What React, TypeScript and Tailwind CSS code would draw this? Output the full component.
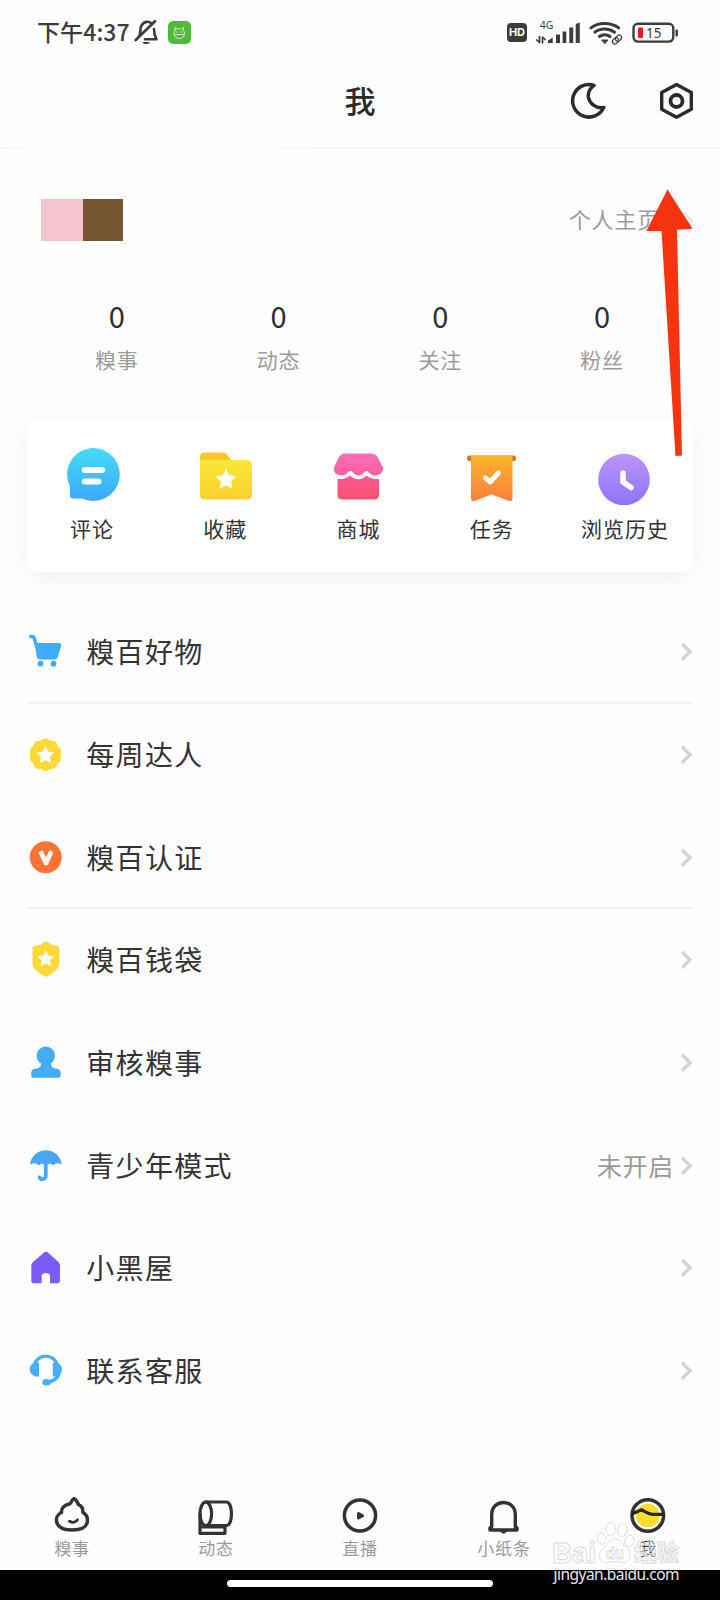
import type { ReactNode } from "react";

type IconProps = { box: string; className: string; children: ReactNode };

function Icon({ box, className, children }: IconProps) {
  return (
    <svg viewBox={box} className={className} fill="none" strokeLinecap="round" strokeLinejoin="round">
      {children}
    </svg>
  );
}

const STAR = "M0 -9.6 L2.9 -3.6 L9.4 -2.8 L4.7 1.9 L5.8 8.5 L0 5.4 L-5.8 8.5 L-4.7 1.9 L-9.4 -2.8 L-2.9 -3.6Z";

function StatusBar() {
  return (
    <div className="flex h-[65px] items-center pl-[37px] pr-[41px] text-[#3c3c3c]">
      <span className="-mt-[3px] text-[23px] leading-[34px] font-medium tracking-[0.1px]">下午4:37</span>
      <Icon box="134 20 27 27" className="ml-[4px] h-[27px] w-[27px]">
        <path d="M139.500 36 C141 33 140 30 141 27.500 C143.500 22 149.500 21.500 152 25 M154 30 C154 34.500 154.500 36.500 156.500 40.300 H145" stroke="#3c3c3c" strokeWidth="2.600" />
        <path d="M135.700 41 L155 22.200" stroke="#3c3c3c" strokeWidth="2.700" />
        <path d="M142.300 43 H149.800 C149 45.800 143.500 45.800 142.300 43Z" fill="#3c3c3c" />
      </Icon>
      <Icon box="168 21 23 23" className="ml-[7px] h-[23px] w-[23px]">
        <rect x="168" y="21" width="23" height="23" rx="5" fill="#4fb938" />
        <path d="M175 30 V27.300 L177.200 29 H181.200 L183.400 27.300 V30 C185.800 34 184.200 38.500 179.300 38.500 C174.200 38.500 172.800 34 175 30Z M174.500 34.500 H184" stroke="#d9f5c9" strokeWidth=".9" />
        <circle cx="177.200" cy="32" r=".7" fill="#d9f5c9" />
        <circle cx="181.500" cy="32" r=".7" fill="#d9f5c9" />
      </Icon>
      <div className="ml-auto flex items-center">
        <span className="flex h-[19px] w-[20px] items-center justify-center rounded-[4px] bg-[#3c3c3c] font-['Inter',sans-serif] text-[11px] font-bold text-white">HD</span>
        <Icon box="532 19 51 27" className="ml-[5px] h-[27px] w-[51px]">
          <text x="539.800" y="29.300" fontSize="10.500" fill="#3c3c3c" fontFamily="Noto Sans, sans-serif">4G</text>
          <path d="M536.800 40 L539.500 42.500 V36.500 M542.500 43 V37 L545.200 39.500" stroke="#3c3c3c" strokeWidth="1.700" />
          <path d="M548 40.500 L552.700 37.500 V43 H548Z M556 34.500 H560 V43 H556Z M562.600 31.500 H566.300 V43 H562.600Z M569.300 27.500 H573.200 V43 H569.300Z M575.700 24 L579.800 22.500 V43 H575.700Z" fill="#3c3c3c" />
        </Icon>
        <Icon box="589 20 35 26" className="ml-[6px] h-[26px] w-[35px]">
          <path d="M591 27.800 C598 22 611 22 618.500 27.800 M595 32.200 C600 27.900 609 27.900 614.500 32.200 M599.500 36.500 C602.500 34 607 34 610 36.500" stroke="#3c3c3c" strokeWidth="3" />
          <path d="M602 40 H608 L605 43.500Z" fill="#3c3c3c" stroke="#3c3c3c" strokeWidth="1" />
          <g transform="rotate(-42 617 39.300)" stroke="#3c3c3c" strokeWidth="1.200">
            <rect x="611.500" y="37" width="6.800" height="5" rx="2.500" />
            <rect x="615.500" y="37" width="6.800" height="5" rx="2.500" />
          </g>
        </Icon>
        <Icon box="632 22 47 22" className="ml-[8px] h-[22px] w-[47px]">
          <rect x="633.500" y="23.800" width="39.800" height="17.800" rx="4.500" stroke="#3c3c3c" strokeWidth="2.400" />
          <rect x="638" y="27.500" width="5" height="10.500" rx="1.200" fill="#e02020" />
          <rect x="675.500" y="29.500" width="2.400" height="7" rx="1" fill="#3c3c3c" />
          <text x="646" y="38" fontSize="13.500" fill="#3c3c3c" fontFamily="Noto Sans, sans-serif">15</text>
        </Icon>
      </div>
    </div>
  );
}

function TitleBar() {
  return (
    <header className="grid h-[82px] grid-cols-3 items-center pb-[10px]">
      <span />
      <h1 className="-mt-[2px] text-center text-[31px] leading-[40px] font-medium text-[#2b2b2b]">我</h1>
      <div className="flex items-center justify-end pr-[25px]">
        <Icon box="570 81 38 40" className="h-[40px] w-[38px]">
          <path d="M594 85.300 A16.300 16.300 0 1 0 603.800 107.400 C596 109 589.300 103.500 588.300 96.500 C587.900 92 590.500 88 594 85.300Z" stroke="#2b2b2b" strokeWidth="3.500" />
        </Icon>
        <Icon box="658 81 37 40" className="ml-[50px] h-[40px] w-[37px]">
          <path d="M676.500 84.500 L691.300 92.500 V109.300 L676.500 117.300 L661.700 109.300 V92.500Z" stroke="#2b2b2b" strokeWidth="3.400" />
          <circle cx="676.500" cy="101" r="6" stroke="#2b2b2b" strokeWidth="3.800" />
        </Icon>
      </div>
    </header>
  );
}

function Chevron({ className = "" }: { className?: string }) {
  return (
    <Icon box="680 1154.300 14 20" className={"h-[20px] w-[14px] " + className}>
      <path d="M683 1157 L691 1165 L683 1173" stroke="#d4d4d4" strokeWidth="3.400" strokeLinecap="butt" strokeLinejoin="miter" />
    </Icon>
  );
}

const stats = ["糗事", "动态", "关注", "粉丝"];

const shortcuts: { label: string; icon: ReactNode }[] = [
  {
    label: "评论",
    icon: (
      <>
        <path d="M93.500 447.500 A26.500 26.500 0 1 1 82 498 H73 Q70 498 70 495 V486 A26.500 26.500 0 0 1 93.500 447.500Z" fill="url(#blue)" />
        <path d="M84.800 469.600 H102 M84.800 480.900 H98.500" stroke="#fff" strokeWidth="6" />
      </>
    ),
  },
  {
    label: "收藏",
    icon: (
      <>
        <path d="M200 474 V457 Q200 452 205 452 H223 Q226 452 228 455 L232 461 V474Z" fill="#fac72b" />
        <path d="M200 459.500 H247 Q252 459.500 252 464 V494 Q252 499 247 499 H205 Q200 499 200 494Z" fill="url(#yellow)" />
        <path d={STAR} transform="translate(226 479)" fill="#fff" stroke="#fff" strokeWidth="1" />
      </>
    ),
  },
  {
    label: "商城",
    icon: (
      <>
        <path d="M345 453 H371 Q375.500 453 377.500 456.500 L382.500 466 C384.500 471 380 475 375 475 C370 475 369 470.500 366.600 470.500 C364 470.500 363 475 358.500 475 C354 475 353 470.500 350.300 470.500 C348 470.500 347 475 342 475 C336 475 332.500 471 334.500 466 L339 456.500 Q341 453 345 453Z" fill="url(#pink)" />
        <path d="M337.500 478.500 C342 479 346.500 478 350 475 C355 480 362 480 366.500 475 C370 478 374.500 479 379 478.500 V494 Q379 499 374 499 H342.500 Q337.500 499 337.500 494Z" fill="url(#rose)" />
      </>
    ),
  },
  {
    label: "任务",
    icon: (
      <>
        <rect x="467" y="455" width="49" height="5.600" rx="2.800" fill="#d9702e" />
        <path d="M471 455.500 H512.500 V498 Q512.500 502 508 500 L491.700 494 L475.500 500 Q471 502 471 498Z" fill="url(#orange)" />
        <path d="M485.500 477.500 L490 481.500 L498.500 472.500" stroke="#fff" strokeWidth="5" />
      </>
    ),
  },
  {
    label: "浏览历史",
    icon: (
      <>
        <circle cx="624" cy="479" r="25.800" fill="url(#purple)" />
        <path d="M623 472.500 V481.500 L631 487" stroke="#fff" strokeWidth="5.600" />
      </>
    ),
  },
];

const shortcutBoxes = ["66 444.500 56 60", "199 444.500 56 60", "332 444.500 56 60", "465 444.500 56 60", "598 444.500 56 60"];

function Gradients() {
  const stops: [string, string, string][] = [
    ["blue", "#45dcf5", "#3ea8fd"],
    ["yellow", "#fae739", "#fbd02f"],
    ["pink", "#f96eb6", "#fb5fa2"],
    ["rose", "#fb5890", "#fc5070"],
    ["orange", "#fbb42c", "#fb7f3c"],
    ["purple", "#bd93f8", "#8b74fb"],
  ];
  return (
    <defs>
      {stops.map(([id, from, to]) => (
        <linearGradient key={id} id={id} x1="0" y1="0" x2="0" y2="1">
          <stop offset="0" stopColor={from} />
          <stop offset="1" stopColor={to} />
        </linearGradient>
      ))}
    </defs>
  );
}

function scallop(cx: number, cy: number, points: number, r: number, depth: number) {
  const steps = 120;
  const out: string[] = [];
  for (let i = 0; i < steps; i++) {
    const a = (i / steps) * Math.PI * 2;
    const rr = r + depth * Math.cos(points * a);
    out.push((cx + rr * Math.sin(a)).toFixed(2) + " " + (cy - rr * Math.cos(a)).toFixed(2));
  }
  return "M" + out.join(" L") + "Z";
}

type Item = { label: string; value?: string; line?: boolean; box: string; icon: ReactNode };

const items: Item[] = [
  {
    label: "糗百好物",
    line: true,
    box: "27 631 37 40",
    icon: (
      <>
        <path d="M30.700 636.500 Q33.700 636 34.500 639 L36.500 646" stroke="#3fadfb" strokeWidth="3.400" />
        <path d="M34.500 643 H58.500 Q61.700 643 61 646 L57.800 657 Q57 659.500 54.500 659.500 H40 Q37.500 659.500 36.800 657Z" fill="#3fadfb" />
        <circle cx="40.500" cy="663.700" r="2.900" fill="#3fadfb" />
        <circle cx="53.500" cy="663.700" r="2.900" fill="#3fadfb" />
      </>
    ),
  },
  {
    label: "每周达人",
    box: "27 734.200 37 40",
    icon: (
      <>
        <path d={scallop(45.5, 755, 10, 15.7, 0.6)} fill="#fcd936" />
        <path d={STAR} transform="translate(45.500 755.300) scale(.86)" fill="#fff" stroke="#fff" strokeWidth="1" />
      </>
    ),
  },
  {
    label: "糗百认证",
    line: true,
    box: "27 836.800 37 40",
    icon: (
      <>
        <circle cx="45.700" cy="857" r="16" fill="#fb7437" />
        <path d="M41.300 852.800 L46 863 L50.700 852.800" stroke="#fff" strokeWidth="4.600" />
      </>
    ),
  },
  {
    label: "糗百钱袋",
    box: "27 939.600 37 40",
    icon: (
      <>
        <path d="M43.500 943 Q46 941 48.500 943 C51 945.500 53 946 56 946 Q59.300 946.300 59.300 949 V963 C59.300 970 52 974 48 976.500 Q46 977.500 44 976.500 C40 974 32.500 970 32.500 963 V949 Q32.500 946.300 36 946 C39 946 41 945.500 43.500 943Z" fill="#fcd936" />
        <path d={STAR} transform="translate(45.800 959.500) scale(.8)" fill="#fff" stroke="#fff" strokeWidth="1" />
      </>
    ),
  },
  {
    label: "审核糗事",
    box: "27 1042.300 37 40",
    icon: (
      <>
        <circle cx="45.800" cy="1056" r="9.200" fill="#42acfb" />
        <path d="M41 1062 H51 C50.500 1067 52.500 1068.500 56 1068.800 Q60.700 1069.200 60.700 1073.500 V1075.500 Q60.700 1078 58 1078 H34 Q31.200 1078 31.200 1075.500 V1073.500 Q31.200 1069.200 36 1068.800 C39.500 1068.500 41.500 1067 41 1062Z" fill="#42acfb" />
      </>
    ),
  },
  {
    label: "青少年模式",
    value: "未开启",
    box: "27 1146 37 40",
    icon: (
      <>
        <path d="M30 1165.500 A16 16 0 0 1 61.800 1165.500 C58 1163.300 55 1164 53.500 1166.500 C51 1163.800 48 1164.300 46 1166.500 C44 1164.300 41 1163.800 38.500 1166.500 C37 1164 33.500 1163.300 30 1165.500Z" fill="#4aa5f8" />
        <path d="M45.800 1165 V1176.500 C45.800 1181 40.500 1181 39.500 1178.300" stroke="#4aa5f8" strokeWidth="3.700" />
      </>
    ),
  },
  {
    label: "小黑屋",
    box: "27 1247.500 37 40",
    icon: (
      <path d="M43.500 1253.500 Q46 1251 48.500 1253.500 L58.500 1262.500 Q60 1264 60 1266 V1281 Q60 1283.800 57.500 1283.800 H50 V1276 C50 1272.500 41.700 1272.500 41.700 1276 V1283.800 H34 Q31.300 1283.800 31.300 1281 V1266 Q31.300 1264 33 1262.500Z" fill="#7b5cf9" />
    ),
  },
  {
    label: "联系客服",
    box: "27 1350 37 40",
    icon: (
      <>
        <path d="M34 1365 A12.200 12.200 0 0 1 57.500 1365 M59 1373 C58 1379 52 1382 46 1382.200" stroke="#45aef9" strokeWidth="3.400" />
        <path d="M39 1363 V1376.500 C33 1377 29.800 1373.500 29.800 1369.500 C29.800 1365 33 1362 39 1363Z M52.800 1363 V1376.500 C58.500 1377 62 1373.500 62 1369.500 C62 1365 58.500 1362 52.800 1363Z" fill="#45aef9" />
        <ellipse cx="46.500" cy="1382.300" rx="4.200" ry="3.200" fill="#45aef9" />
      </>
    ),
  },
];

const tabs: { label: string; active?: boolean; box: string; icon: ReactNode }[] = [
  {
    label: "糗事",
    box: "52 1494 40 42",
    icon: (
      <>
        <path d="M74 1498.700 C71.500 1499.500 71.700 1503 69.500 1504 C64.500 1505 61 1508 61.500 1512.500 C57 1514.500 55.800 1519 56.800 1522.500 C58.500 1528.500 64 1530 72 1530 C80.500 1530 86 1528.500 87.300 1522 C88 1517.500 86.500 1514.500 83 1512.500 C83 1508 81 1505.500 78.500 1504.500 C77 1502 76.500 1499.500 74 1498.700Z" stroke="#333" strokeWidth="3.500" />
        <path d="M69.500 1521.300 Q74 1524 77.500 1519.800" stroke="#333" strokeWidth="2.800" />
      </>
    ),
  },
  {
    label: "动态",
    box: "196 1494 40 42",
    icon: (
      <>
        <ellipse cx="205.800" cy="1513.800" rx="5.800" ry="11.800" stroke="#333" strokeWidth="3.200" />
        <path d="M205.500 1502 H226.500 C233 1502 233 1525 227 1525.500 H207 M200 1514 V1533.300 H225 V1526 M201 1527 H224" stroke="#333" strokeWidth="3.200" />
      </>
    ),
  },
  {
    label: "直播",
    box: "340 1494 40 42",
    icon: (
      <>
        <circle cx="360" cy="1515.500" r="15.600" stroke="#333" strokeWidth="3.500" />
        <path d="M358.500 1513.500 L362.500 1515.700 L358.500 1518Z" fill="#333" stroke="#333" strokeWidth="3" />
      </>
    ),
  },
  {
    label: "小纸条",
    box: "484 1494 40 42",
    icon: (
      <>
        <path d="M491.700 1527 V1514.500 C491.700 1498.500 515.300 1498.500 515.300 1514.500 V1527 Q517.500 1527.500 517 1530 H490 Q489.500 1527.500 491.700 1527Z" stroke="#333" strokeWidth="3.400" />
        <path d="M500.500 1531.500 Q503.500 1535 506.500 1531.500Z" fill="#333" stroke="#333" strokeWidth="1" />
      </>
    ),
  },
  {
    label: "我",
    active: true,
    box: "628 1494 40 42",
    icon: (
      <>
        <circle cx="647.800" cy="1515.500" r="11.800" fill="#fbdc2e" />
        <circle cx="647.800" cy="1515.500" r="15.800" stroke="#333" strokeWidth="3.500" />
        <path d="M633 1513.500 L641.500 1509.800 C646 1512 649 1514.800 653 1514.300 H663" stroke="#2a2a10" strokeWidth="3.200" />
      </>
    ),
  },
];

export default function App() {
  return (
    <div className="relative flex h-[1600px] w-[720px] flex-col overflow-hidden bg-[#fefefe] font-['Noto_Sans_CJK_SC',sans-serif]">
      <StatusBar />
      <TitleBar />
      <div className="flex h-[2px]">
        <div className="w-[35px] bg-linear-to-r from-[#f5f5f5] to-transparent" />
        <div className="ml-[205px] w-[100px] bg-linear-to-r from-transparent to-[#f5f5f5]" />
        <div className="flex-1 bg-[#f5f5f5]" />
      </div>

      <section className="flex h-[141px] items-center pl-[41px] pr-[26px]">
        <div className="h-[42px] w-[41.500px] bg-[#f4c4cf]" />
        <div className="h-[42px] w-[40.500px] bg-[#745431]" />
        <span className="-mt-[3px] ml-auto text-[22px] leading-[32px] tracking-[0.8px] text-[#9b9b9b]">个人主页</span>
        <Chevron className="ml-[20px] opacity-60" />
      </section>

      <section className="grid h-[129px] grid-cols-4 pr-[37px] pl-[36px]">
        {stats.map((label) => (
          <div key={label} className="flex flex-col items-center pt-[7px]">
            <span className="text-[29px] leading-[36px] text-[#2e2e2e]">0</span>
            <span className="mt-[11px] text-[21px] leading-[30px] tracking-[1px] text-[#9b9b9b]">{label}</span>
          </div>
        ))}
      </section>

      <section className="mx-[27px] grid h-[153px] grid-cols-5 rounded-[9px] bg-white pt-[26px] shadow-[0_4px_24px_rgba(0,0,0,0.06)]">
        {shortcuts.map((s, i) => (
          <div key={s.label} className="flex flex-col items-center">
            <Icon box={shortcutBoxes[i]} className="h-[60px] w-[56px]">
              {i === 0 && <Gradients />}
              {s.icon}
            </Icon>
            <span className="mt-[8px] -ml-[3px] text-[21px] leading-[30px] tracking-[1px] text-[#333]">{s.label}</span>
          </div>
        ))}
      </section>

      <ul className="mx-[27px] mt-[29px]">
        {items.map((item) => (
          <li
            key={item.label}
            className={"flex h-[102.700px] items-center border-b-2 " + (item.line ? "border-[#f3f3f3]" : "border-transparent")}
          >
            <Icon box={item.box} className="h-[40px] w-[37px]">
              {item.icon}
            </Icon>
            <span className="ml-[22.300px] text-[28px] leading-[40px] tracking-[1.300px] text-[#333]">{item.label}</span>
            {item.value && <span className="ml-auto text-[25px] leading-[36px] tracking-[0.7px] text-[#9b9b9b]">{item.value}</span>}
            <Chevron className={item.value ? "ml-[5px]" : "ml-auto"} />
          </li>
        ))}
      </ul>

      <nav className="mt-auto grid h-[76px] shrink-0 grid-cols-5">
        {tabs.map((tab) => (
          <div key={tab.label} className="flex flex-col items-center">
            <Icon box={tab.box} className="h-[42px] w-[40px]">
              {tab.icon}
            </Icon>
            <span className={"text-[17px] leading-[24px] tracking-[0.8px] " + (tab.active ? "text-[#333]" : "text-[#9b9b9b]")}>{tab.label}</span>
          </div>
        ))}
      </nav>

      <div className="flex h-[30px] shrink-0 justify-center bg-black pt-[10px]">
        <div className="h-[7px] w-[266px] rounded-full bg-white" />
      </div>

      <svg viewBox="640 185 60 275" className="absolute top-[185px] left-[640px] h-[275px] w-[60px]">
        <path d="M667.500 189.500 L692.500 228.700 L677 229.700 L682 455.500 L675.500 456 L661.500 231 L646.300 231Z" fill="#f5330f" />
      </svg>

      <svg viewBox="545 1515 145 75" className="absolute top-[1515px] left-[545px] h-[75px] w-[145px]">
        <g fill="#fff" fillOpacity=".6" stroke="#d9d9d9" strokeWidth=".9">
          <text x="552" y="1562.500" fontSize="30" textLength="44" lengthAdjust="spacingAndGlyphs" fontWeight="700" fontFamily="Liberation Sans, sans-serif">Bai</text>
          <ellipse cx="601.500" cy="1538.500" rx="4.500" ry="5.800" transform="rotate(-15 601.500 1538.500)" />
          <ellipse cx="610.500" cy="1529" rx="4.800" ry="6.500" />
          <ellipse cx="622.500" cy="1530" rx="4.800" ry="6.500" transform="rotate(12 622.500 1530)" />
          <ellipse cx="629.500" cy="1541" rx="4.500" ry="5.800" transform="rotate(20 629.500 1541)" />
          <path d="M615 1539 C621 1539 623 1545 627 1548.500 C633 1554 630.500 1563 623 1562.500 C617 1561.500 613 1561.500 607 1562.500 C599 1563 597 1554 602.500 1549 C607 1545 609 1539 615 1539Z" />
          <text x="606" y="1559" fontSize="17" fontWeight="700" textLength="18" lengthAdjust="spacingAndGlyphs" fontFamily="Liberation Sans, sans-serif">du</text>
          <text x="634" y="1561" fontSize="22.500" fontWeight="700" fillOpacity=".35" fontFamily="Noto Sans CJK SC, sans-serif">经验</text>
        </g>
        <text x="553.500" y="1579.500" fontSize="15.500" fill="#e8e8e8" textLength="126" lengthAdjust="spacing" fontFamily="Noto Sans, sans-serif">jingyan.baidu.com</text>
      </svg>
    </div>
  );
}
